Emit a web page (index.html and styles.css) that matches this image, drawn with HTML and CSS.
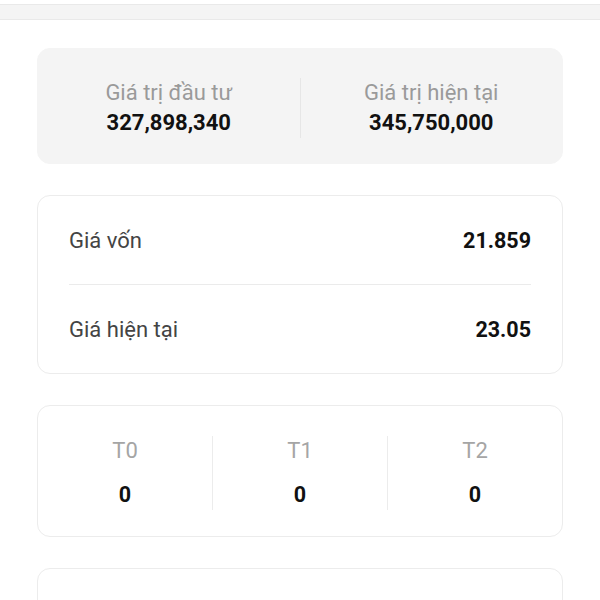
FILE: index.html
```html
<!DOCTYPE html>
<html lang="vi">
<head>
  <meta charset="UTF-8" />
  <meta name="viewport" content="width=device-width, initial-scale=1.0">
  <title>Danh mục</title>
  <link rel="stylesheet" href="styles.css">
</head>
<body>
  <div class="top-strip"></div>

  <div class="page">
    <div class="card summary">
      <div class="summary-col">
        <div class="summary-label">Giá trị đầu tư</div>
        <div class="summary-value">327,898,340</div>
      </div>
      <div class="summary-col">
        <div class="summary-label">Giá trị hiện tại</div>
        <div class="summary-value">345,750,000</div>
      </div>
    </div>

    <div class="card prices">
      <div class="price-row">
        <span class="price-label">Giá vốn</span>
        <span class="price-value">21.859</span>
      </div>
      <div class="price-row">
        <span class="price-label">Giá hiện tại</span>
        <span class="price-value">23.05</span>
      </div>
    </div>

    <div class="card settle">
      <div class="settle-col">
        <div class="settle-label">T0</div>
        <div class="settle-value">0</div>
      </div>
      <div class="settle-col">
        <div class="settle-label">T1</div>
        <div class="settle-value">0</div>
      </div>
      <div class="settle-col">
        <div class="settle-label">T2</div>
        <div class="settle-value">0</div>
      </div>
    </div>

    <div class="card more"></div>
  </div>
</body>
</html>
```

FILE: styles.css
```css
body {
  margin: 0;
  font-family: Roboto, "Noto Sans", sans-serif;
  background: #fff;
  color: #111;
}
.top-strip {
  margin: 4px -6px 0;
  height: 14px;
  background: #f4f4f4;
  border: 1px solid #e9e9e9;
  border-radius: 4px;
}
.page {
  padding: 28px 37px 0;
  display: flex;
  flex-direction: column;
  gap: 31px;
}
.card {
  border-radius: 13px;
  border: 1px solid #ececec;
  background: #fff;
}
.summary {
  background: #f4f4f4;
  border-color: #f4f4f4;
  display: flex;
  padding: 29px 0 25px;
}
.summary-col {
  flex: 1;
  text-align: center;
}
.summary-col + .summary-col {
  border-left: 1px solid #e6e6e6;
}
.summary-label {
  font-size: 22px;
  line-height: 30px;
  color: #9a9a9a;
}
.summary-value {
  font-size: 22px;
  line-height: 30px;
  font-weight: bold;
}
.prices {
  padding: 0 31px;
}
.price-row {
  display: flex;
  justify-content: space-between;
  align-items: center;
  height: 88px;
}
.price-row + .price-row {
  border-top: 1px solid #ebebeb;
}
.price-label {
  font-size: 22px;
  color: #444;
}
.price-value {
  font-size: 21.5px;
  font-weight: bold;
}
.settle {
  display: flex;
  padding: 30px 0 26px;
}
.settle-col {
  flex: 1;
  text-align: center;
}
.settle-col + .settle-col {
  border-left: 1px solid #ececec;
}
.settle-label {
  font-size: 22px;
  line-height: 30px;
  color: #a5a5a5;
}
.settle-value {
  margin-top: 14px;
  font-size: 21.5px;
  line-height: 30px;
  font-weight: bold;
}
.more {
  height: 60px;
}
```
